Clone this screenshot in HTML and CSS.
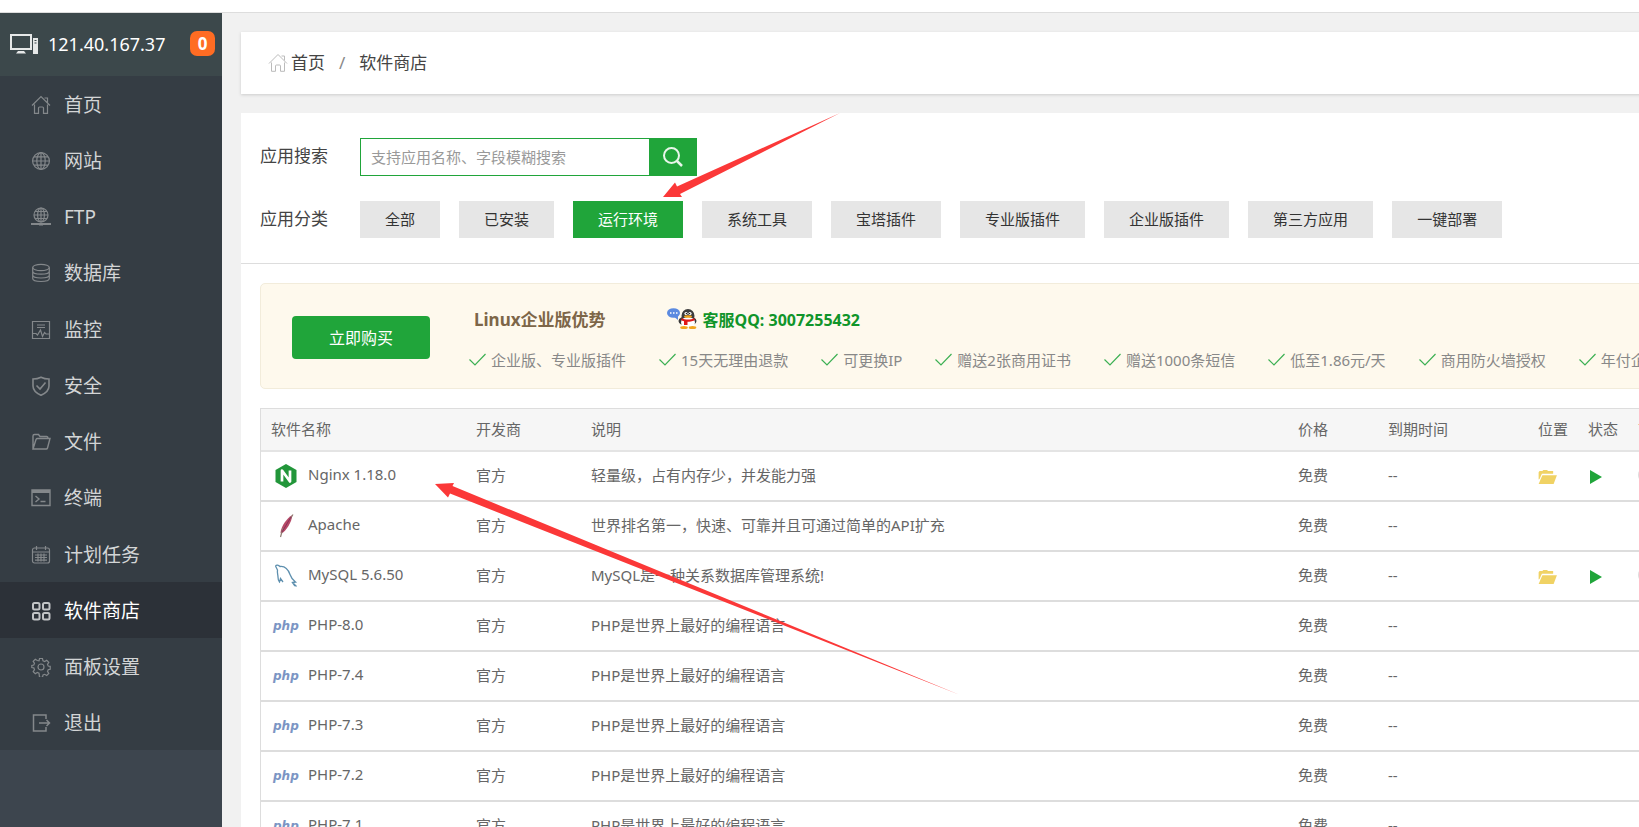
FILE: index.html
```html
<!DOCTYPE html>
<html lang="zh-CN">
<head>
<meta charset="utf-8">
<title>软件商店</title>
<link rel="stylesheet" href="styles.css">
</head>
<body>
<svg class="sprite" aria-hidden="true">
  <symbol id="home" viewBox="0 0 20 20"><path d="M1 10.500 10 1.500 19 10.500M13.500 3h3v4.500M3.500 9.500V18.300H7.500V13a1 1 0 0 1 1-1h3a1 1 0 0 1 1 1V18.300H16.500V9.500"/></symbol>
  <symbol id="folder" viewBox="0 0 20 16"><path fill="#f0d264" d="M0 2.500 1 1h3l1-1h4l1 1h5.500v3H3.500L1 9.500 0 10z"/><path fill="#f0d264" d="M4 5.500h15.500L16 15H0z"/></symbol>
  <symbol id="play" viewBox="0 0 12 14"><path fill="#20a53a" d="M0 0 12 7 0 14z"/></symbol>
  <symbol id="check" viewBox="0 0 17 13"><path d="M.5 6.500 6 12 16.500 1" fill="none" stroke="#3cb053" stroke-width="1.200"/></symbol>
</svg>
<div class="app">
  <aside class="sidebar">
    <div class="host">
      <svg class="host-icon" viewBox="0 0 28 20"><path d="M1 1h20v14H1z" fill="none" stroke="#e6e8e8" stroke-width="2"/><path d="M8 17h6l2 2.500H6zM23 4h5v16h-5z" fill="#e6e8e8"/><path d="M24.500 6.500h2M24.500 9h2" stroke="#3c484b"/></svg>
      <span class="host-ip">121.40.167.37</span>
      <span class="host-badge">0</span>
    </div>
    <nav class="menu">
      <a class="menu-item" href="#"><svg class="menu-icon" viewBox="0 0 20 20"><use href="#home"/></svg>首页</a>
      <a class="menu-item" href="#"><svg class="menu-icon" viewBox="0 0 20 20"><circle cx="10" cy="10" r="8.400"/><ellipse cx="10" cy="10" rx="4.200" ry="8.400"/><path d="M10 1.600v16.800M1.600 10h16.800M3 5.800h14M3 14.200h14"/></svg>网站</a>
      <a class="menu-item" href="#"><svg class="menu-icon" viewBox="0 0 20 20"><circle cx="10" cy="8" r="7"/><ellipse cx="10" cy="8" rx="3.400" ry="7"/><path d="M10 1v14M3 8h14M4 4.500h12M4 11.500h12"/><path stroke-width="2" d="M0 17h20M8 17.500h4"/></svg>FTP</a>
      <a class="menu-item" href="#"><svg class="menu-icon" viewBox="0 0 20 20"><ellipse cx="10" cy="4.500" rx="8.300" ry="3.200"/><path d="M1.700 4.500v11c0 4 16.600 4 16.600 0v-11M1.700 8.200c0 4 16.600 4 16.600 0M1.700 12c0 4 16.600 4 16.600 0"/></svg>数据库</a>
      <a class="menu-item" href="#"><svg class="menu-icon" viewBox="0 0 20 20"><path d="M1.500 1.500h17v17h-17zM6 5h8M6 7.500h8M2 13.500h3l1.500 1.500 3-5 2 6.500 2-4 1.500 1.500H18"/></svg>监控</a>
      <a class="menu-item" href="#"><svg class="menu-icon" viewBox="0 0 20 20"><path stroke-width="1.600" d="M10 1.200c3 1.500 5.500 1.800 8 1.800v7c0 4-3 7-8 9.300C5 17 2 14 2 10V3c2.500 0 5-.3 8-1.800zM5.500 9.500 9 13l5.500-6.500"/></svg>安全</a>
      <a class="menu-item" href="#"><svg class="menu-icon" viewBox="0 0 20 20"><path stroke-width="1.400" d="M2 17V4c0-1 .5-1.500 1.500-1.500h4L9 4.500h6.500c1 0 1.500.5 1.500 2M2 17 5 7.500c.3-.7.700-1 1.500-1H19L16.500 16c-.2.700-.6 1-1.300 1z"/></svg>文件</a>
      <a class="menu-item" href="#"><svg class="menu-icon" viewBox="0 0 20 20"><path stroke-width="1.400" d="M1 2h18v15.500H1zM4.500 8l3.500 3-3.500 3M9.500 13.500h5"/><path stroke-width="3" d="M1 3.500h18"/></svg>终端</a>
      <a class="menu-item" href="#"><svg class="menu-icon" viewBox="0 0 20 20"><rect x="1.500" y="3" width="17" height="15" rx="2"/><path d="M1.500 7h17M5.500 1v4M14.500 1v4M4 10h12M4 12.500h12M4 15.200h12M7 8.500v8M10 8.500v8M13 8.500v8"/></svg>计划任务</a>
      <a class="menu-item active" href="#"><svg class="menu-icon" viewBox="0 0 20 20"><g stroke-width="2"><rect x="2" y="2" width="6.500" height="6.500" rx="1.500"/><rect x="12" y="2" width="6.500" height="6.500" rx="1.500"/><rect x="2" y="12" width="6.500" height="6.500" rx="1.500"/><rect x="12" y="12" width="6.500" height="6.500" rx="1.500"/></g></svg>软件商店</a>
      <a class="menu-item" href="#"><svg class="menu-icon" viewBox="0 0 20 20"><circle cx="10" cy="10" r="3"/><path d="M8.500 1.500h3l.5 2.300 1.700.7 2-1.200 2.100 2.100-1.300 2 .7 1.600 2 .3v3l-2 .4-.7 1.700 1.300 2-2.100 2.100-2-1.200-1.700.7-.5 2.300h-3L8 16.200l-1.700-.7-2 1.200-2.100-2.100 1.300-2-.7-1.700-2-.4v-2l2-.5.7-1.700-1.300-2 2.100-2 2 1.200L8 3.800z"/></svg>面板设置</a>
      <a class="menu-item" href="#"><svg class="menu-icon" viewBox="0 0 20 20"><path stroke-width="1.500" d="M15 6V2H2.500v16H15v-4M8 10h10.500M15.500 7l3 3-3 3"/></svg>退出</a>
    </nav>
  </aside>
  <main class="main">
    <div class="crumbs">
      <svg class="crumb-icon" viewBox="0 0 20 20"><use href="#home"/></svg>
      <a href="#">首页</a><span class="slash">/</span><a href="#">软件商店</a>
    </div>
    <section class="panel">
      <div class="filters">
        <form class="filter-row">
          <label class="filter-label" for="q">应用搜索</label>
          <input class="search-input" id="q" type="text" placeholder="支持应用名称、字段模糊搜索">
          <button class="search-btn" type="button" aria-label="搜索"><svg class="search-icon" viewBox="0 0 20 20"><circle cx="8.500" cy="8.500" r="7.500" fill="none" stroke="#e8f6ea" stroke-width="2"/><path d="m14 14 5 5" stroke="#e8f6ea" stroke-width="2.500"/></svg></button>
        </form>
        <div class="filter-row">
          <span class="filter-label">应用分类</span>
          <div class="cats">
            <button class="cat" type="button">全部</button>
            <button class="cat" type="button">已安装</button>
            <button class="cat on" type="button">运行环境</button>
            <button class="cat" type="button">系统工具</button>
            <button class="cat" type="button">宝塔插件</button>
            <button class="cat" type="button">专业版插件</button>
            <button class="cat" type="button">企业版插件</button>
            <button class="cat" type="button">第三方应用</button>
            <button class="cat" type="button">一键部署</button>
          </div>
        </div>
      </div>
      <div class="promo">
        <button class="buy" type="button">立即购买</button>
        <div class="promo-body">
          <div class="promo-head">
            <h2 class="promo-title">Linux企业版优势</h2>
            <a class="qq" href="#">
              <svg class="qq-icon" viewBox="0 0 30 21"><ellipse cx="6.500" cy="5" rx="6.500" ry="4.800" fill="#5b8ae0"/><path d="M6 8l5 4V8z" fill="#5b8ae0"/><path d="M3 5h1.500M6 5h1.500M9 5h1.500" stroke="#fff" stroke-width="1.300"/><ellipse cx="20.500" cy="13" rx="9" ry="5" fill="#3a3a3a"/><ellipse cx="21" cy="8" rx="6.500" ry="7" fill="#3d3d3d"/><ellipse cx="21" cy="14.500" rx="7" ry="5.500" fill="#fff"/><circle cx="19" cy="5.500" r="1.600" fill="#fff"/><circle cx="23" cy="5.500" r="1.600" fill="#fff"/><circle cx="19.400" cy="5.600" r=".7"/><circle cx="22.600" cy="5.600" r=".7"/><ellipse cx="21" cy="8.500" rx="4" ry="1.300" fill="#f2a51c"/><path d="M14.500 10c4 2 9 2 13 0v2.500c-2.500 1-5 1.300-7 1.300V17h-3.500v-3.800l-2.500-.7z" fill="#e01818"/><ellipse cx="17" cy="19.500" rx="3.800" ry="1.500" fill="#f2a51c"/><ellipse cx="25.500" cy="19.500" rx="3.800" ry="1.500" fill="#f2a51c"/></svg>
              客服QQ: 3007255432</a>
          </div>
          <ul class="perks">
            <li><svg class="tick"><use href="#check"/></svg>企业版、专业版插件</li>
            <li><svg class="tick"><use href="#check"/></svg>15天无理由退款</li>
            <li><svg class="tick"><use href="#check"/></svg>可更换IP</li>
            <li><svg class="tick"><use href="#check"/></svg>赠送2张商用证书</li>
            <li><svg class="tick"><use href="#check"/></svg>赠送1000条短信</li>
            <li><svg class="tick"><use href="#check"/></svg>低至1.86元/天</li>
            <li><svg class="tick"><use href="#check"/></svg>商用防火墙授权</li>
            <li><svg class="tick"><use href="#check"/></svg>年付企业版</li>
          </ul>
        </div>
      </div>
      <table class="soft">
        <colgroup><col class="c-name"><col class="c-dev"><col><col class="c-price"><col class="c-date"><col class="c-small"><col class="c-small"><col class="c-home"><col class="c-ops"></colgroup>
        <thead><tr><th>软件名称</th><th>开发商</th><th>说明</th><th>价格</th><th>到期时间</th><th>位置</th><th>状态</th><th>首页显示</th><th>操作</th></tr></thead>
        <tbody>
          <tr><td><div class="app-name"><svg class="logo" viewBox="0 0 26 24"><path fill="#22963a" d="M13 0 23.500 6v12L13 24 2.500 18V6z"/><path d="M9 17.500v-11l8 11v-11" fill="none" stroke="#fff" stroke-width="2.700" stroke-linejoin="round"/></svg>Nginx 1.18.0</div></td><td>官方</td><td>轻量级，占有内存少，并发能力强</td><td>免费</td><td>--</td><td><svg class="folder"><use href="#folder"/></svg></td><td><svg class="play"><use href="#play"/></svg></td><td><input class="switch" type="checkbox" aria-label="首页显示"></td><td></td></tr>
          <tr><td><div class="app-name"><svg class="logo" viewBox="0 0 26 24"><path fill="#b64a67" d="M19.500 1C14 4 8 12 7.500 19l1 .5c5-3 10-11 11-18.500z"/><path d="M20 .5 17 5M10 14l-2.500 9" stroke="#8d7a70" stroke-width="1.200"/><path d="M18 3 9 18" stroke="#8a2f58"/></svg>Apache</div></td><td>官方</td><td>世界排名第一，快速、可靠并且可通过简单的API扩充</td><td>免费</td><td>--</td><td></td><td></td><td></td><td></td></tr>
          <tr><td><div class="app-name"><svg class="logo" viewBox="0 0 26 24"><path fill="none" stroke="#5d8fae" stroke-width="1.300" d="M2.500 2c1-1.500 3-1 4.500.5 4-.5 8 2.500 10 8 1 3 2 5 5.500 7.500l-3 .5 4 4M2.500 2l2 4c-.5 3 .5 5 .5 7s0 3.500 1.500 5l1-3.500 2.500 3.500M19.500 18.500l2.500 3.500"/></svg>MySQL 5.6.50</div></td><td>官方</td><td>MySQL是一种关系数据库管理系统!</td><td>免费</td><td>--</td><td><svg class="folder"><use href="#folder"/></svg></td><td><svg class="play"><use href="#play"/></svg></td><td><input class="switch" type="checkbox" aria-label="首页显示"></td><td></td></tr>
          <tr><td><div class="app-name"><span class="logo php">php</span>PHP-8.0</div></td><td>官方</td><td>PHP是世界上最好的编程语言</td><td>免费</td><td>--</td><td></td><td></td><td></td><td></td></tr>
          <tr><td><div class="app-name"><span class="logo php">php</span>PHP-7.4</div></td><td>官方</td><td>PHP是世界上最好的编程语言</td><td>免费</td><td>--</td><td></td><td></td><td></td><td></td></tr>
          <tr><td><div class="app-name"><span class="logo php">php</span>PHP-7.3</div></td><td>官方</td><td>PHP是世界上最好的编程语言</td><td>免费</td><td>--</td><td></td><td></td><td></td><td></td></tr>
          <tr><td><div class="app-name"><span class="logo php">php</span>PHP-7.2</div></td><td>官方</td><td>PHP是世界上最好的编程语言</td><td>免费</td><td>--</td><td></td><td></td><td></td><td></td></tr>
          <tr><td><div class="app-name"><span class="logo php">php</span>PHP-7.1</div></td><td>官方</td><td>PHP是世界上最好的编程语言</td><td>免费</td><td>--</td><td></td><td></td><td></td><td></td></tr>
        </tbody>
      </table>
    </section>
  </main>
  <svg class="arrow arrow-cat" viewBox="0 0 180 90"><path d="M3 87 15 72.500 17 76.500 180 3 20 84 22 87z"/></svg>
  <svg class="arrow arrow-nginx" viewBox="0 0 530 220"><path d="M5 14 24 13 22.500 16 530 225 20 23.500 18 27.500z"/></svg>
</div>
</body>
</html>
```
FILE: styles.css
```css
* { box-sizing: border-box; }
body {
  margin: 0;
  font: 15px/20px "Noto Sans", "Noto Sans CJK SC", sans-serif;
  color: #666;
  background: #f1f1f1;
}
a { color: inherit; text-decoration: none; }
button, input { font: inherit; border: 0; margin: 0; }
.sprite { position: absolute; width: 0; height: 0; }

.app {
  position: relative;
  display: flex;
  height: 100vh;
  overflow: hidden;
  border-top: 12px solid #fff;
}

/* Sidebar */
.sidebar {
  flex: none;
  width: 222px;
  border-top: 1px solid #ddd;
  background: #3d454e;
}
.host {
  display: flex;
  align-items: center;
  height: 63px;
  padding: 0 7px 2px 10px;
  background: #3c484b;
  color: #fff;
}
.host-icon { width: 28px; height: 20px; }
.host-ip { margin-left: 10px; font-size: 18px; }
.host-badge {
  width: 25px;
  margin-left: auto;
  border-radius: 7px;
  background: #ff6c23;
  font-size: 17px;
  font-weight: 700;
  line-height: 25px;
  text-align: center;
}
.menu {
  display: grid;
  grid-auto-rows: 1fr;
  gap: 1px;
  min-height: 674px;
  background: #353d44;
}
.menu-item {
  display: flex;
  align-items: center;
  gap: 13px;
  padding: 2px 0 0 31px;
  font-size: 19px;
  color: #d3d5d6;
}
.menu-icon { width: 20px; height: 20px; fill: none; stroke: #84888b; stroke-width: 1.2; }
.menu-item.active { background: #2c3138; color: #fff; }
.active .menu-icon { stroke: #c2c4c6; }

/* Content */
.main {
  flex: 1 0 1700px;
  padding: 19px;
  border-top: 1px solid #ddd;
}
.crumbs {
  display: flex;
  align-items: center;
  height: 62px;
  padding-left: 27px;
  background: #fff;
  box-shadow: 0 1px 3px #ccc;
  font-size: 17px;
  color: #444;
}
.crumb-icon { width: 20px; height: 20px; margin-right: 3px; fill: none; stroke: #bbb; }
.slash { margin: 0 14px; color: #888; }

.panel { margin-top: 19px; padding-bottom: 19px; background: #fff; }
.filters {
  display: grid;
  gap: 25px;
  padding: 25px 19px;
  border-bottom: 1px solid #ddd;
}
.filter-row { display: flex; align-items: center; }
.filter-label { width: 100px; padding-bottom: 2px; font-size: 17px; color: #444; }
.search-input {
  width: 289px;
  height: 38px;
  padding: 0 10px;
  border: 1px solid #20a53a;
  border-right: 0;
  background: #fff;
}
.search-input::placeholder { color: #999; opacity: 1; }
.search-btn {
  display: grid;
  place-items: center;
  width: 48px;
  height: 38px;
  padding: 0;
  background: #20a53a;
}
.search-icon { width: 20px; height: 20px; }
.cats { display: flex; gap: 19px; }
.cat { height: 37px; padding: 0 25px 2px; background: #e6e6e6; color: #333; }
.cat.on { background: #20a53a; color: #fff; }

/* Promotion */
.promo {
  display: flex;
  align-items: center;
  gap: 39px;
  height: 106px;
  margin: 19px 19px 0;
  padding: 3px 0 0 31px;
  border: 1px solid #f2ecdb;
  border-radius: 5px;
  background: #fef9ed;
}
.buy {
  width: 138px;
  height: 43px;
  border-radius: 4px;
  background: #20a53a;
  color: #fff;
  font-size: 16px;
}
.promo-head { display: flex; align-items: center; gap: 61px; padding: 2px 0 0 5px; }
.promo-title { margin: 0; font-size: 17px; color: #7d6648; }
.qq { display: flex; align-items: center; gap: 6px; font-size: 16px; font-weight: 700; color: #10952a; }
.qq-icon { width: 30px; height: 21px; margin-bottom: 4px; }
.perks {
  display: flex;
  gap: 33px;
  margin: 17px 0 0;
  padding: 0;
  list-style: none;
  white-space: nowrap;
  color: #888;
}
.perks li { display: flex; align-items: center; gap: 5px; }
.tick { width: 17px; height: 13px; }

/* Software table */
.soft {
  width: calc(100% - 38px);
  margin: 19px 19px 0;
  table-layout: fixed;
  border-spacing: 0;
  border: 1px solid #ddd;
}
.c-name { width: 205px; }
.c-dev { width: 115px; }
.c-price { width: 90px; }
.c-date { width: 150px; }
.c-small { width: 50px; }
.c-home { width: 100px; }
.c-ops { width: 155px; }
.soft th, .soft td {
  height: 50px;
  padding: 0 10px 2px;
  border-bottom: 2px solid #ddd;
  text-align: left;
  vertical-align: middle;
  font-weight: 400;
  white-space: nowrap;
}
.soft th { height: 43px; background: #f6f6f6; border-color: #e4e4e4; }
.app-name { display: flex; align-items: center; gap: 9px; padding: 0 0 2px 2px; }
.logo { width: 26px; height: 24px; margin-top: 3px; }
.php {
  color: #7b95c4;
  font: italic 700 12px/24px "DejaVu Sans", sans-serif;
}
.folder, .play { display: block; margin-top: 4px; }
.folder { width: 20px; height: 15px; }
.play { width: 12px; height: 14px; margin-left: 2px; }
.switch {
  display: block;
  width: 30px;
  height: 16px;
  appearance: none;
  border-radius: 8px;
  background: #ddd;
}

/* Pointer arrows drawn over the page */
.arrow { position: absolute; fill: #fb3838; pointer-events: none; overflow: visible; }
.arrow-cat { left: 660px; top: 98px; width: 180px; height: 90px; }
.arrow-nginx { left: 430px; top: 458px; width: 530px; height: 220px; }
```
